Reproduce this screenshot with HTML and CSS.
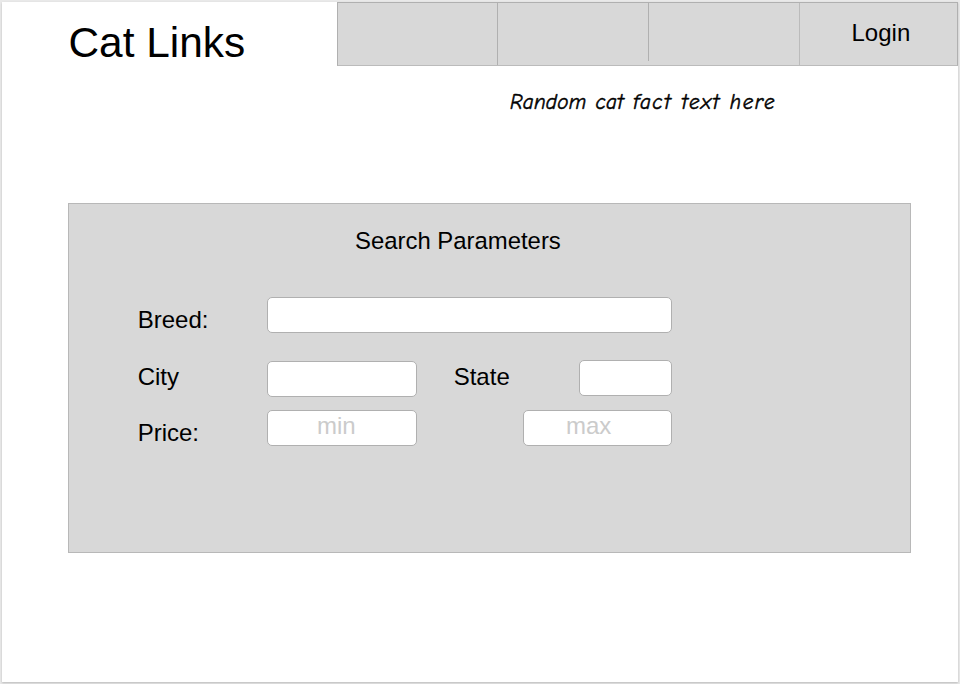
FILE: index.html
```html
<!DOCTYPE html>
<html lang="en">
<head>
<meta charset="utf-8">
<title>Cat Links</title>
<link rel="stylesheet" href="styles.css">
</head>
<body>
<div class="page">
  <header class="header">
    <h1 class="brand">Cat Links</h1>
    <nav class="nav">
      <div class="nav-item"></div>
      <div class="nav-item"></div>
      <div class="nav-item"></div>
      <div class="nav-item login">Login</div>
    </nav>
  </header>
  <p class="fact"><span class="lead">Random</span> <span class="lead">cat</span> <span>fact</span> <span>text</span> <span>here</span></p>
  <main class="panel">
    <h2 class="title">Search Parameters</h2>
    <div class="row breed">
      <span class="label">Breed:</span>
      <div class="field wide"></div>
    </div>
    <div class="row place">
      <span class="label">City</span>
      <div class="field city"></div>
      <span class="label state-label">State</span>
      <div class="field state"></div>
    </div>
    <div class="row price">
      <span class="label">Price:</span>
      <div class="field min">min</div>
      <div class="field max">max</div>
    </div>
  </main>
</div>
</body>
</html>
```
FILE: styles.css
```css
* { box-sizing: border-box; }
body {
  margin: 0;
  height: 684px;
  padding: 2px;
  overflow: hidden;
  background: #e9e9e9;
  color: #000;
  font: 24px/28px "Liberation Sans", Arial, sans-serif;
}
.page {
  height: 680px;
  background: #fff;
  box-shadow: 0 1px 2px #bbb;
}
.header {
  display: flex;
  height: 64px;
}
.brand {
  width: 335px;
  margin: 0;
  padding: 17px 0 0 66.5px;
  font-size: 42.4px;
  line-height: 48px;
  font-weight: 400;
}
.nav {
  display: grid;
  grid-template-columns: 160px 151px 151px 157px;
  width: 621px;
  border: 1px solid #b0b0b0;
  border-bottom-color: #bbb;
  background: #d8d8d8;
}
.nav-item { border-right: 1px solid #b0b0b0; }
.nav-item:nth-child(2) { height: 58px; }
.nav-item:nth-child(3) { border-right-color: #bbb; }
.nav-item.login {
  border-right: 0;
  padding: 16px 0 0 51.5px;
}
.fact {
  display: flex;
  justify-content: space-between;
  width: 266px;
  margin: 22px 0 0 508px;
  font: italic 21px/28px "Bradley Hand", "Comic Neue", Lato, cursive;
  letter-spacing: 1.5px;
  -webkit-text-stroke: 0.5px #000;
}
.fact .lead { letter-spacing: 0.3px; }
.panel {
  width: 843px;
  height: 350px;
  margin: 87px 0 0 66px;
  padding: 23px 0 0 68px;
  border: 1px solid #b8b8b8;
  background: #d8d8d8;
}
.title {
  margin: 0 0 0 218px;
  font-size: 23.9px;
  line-height: 28px;
  font-weight: 400;
}
.row {
  display: flex;
  align-items: flex-start;
}
.label {
  width: 130px;
  padding-left: 0.7px;
}
.breed { margin-top: 42px; height: 63px; }
.breed .label, .price .label { padding-top: 9px; }
.place { height: 50px; }
.place .label { padding-top: 3px; }
.field {
  height: 36px;
  border: 1px solid #b0b0b0;
  border-radius: 5px;
  background: #fff;
  color: #cbcbcb;
}
.wide { width: 405px; }
.city { width: 150px; margin-top: 1px; }
.place .state-label { width: 126px; margin-left: 36px; }
.state { width: 93px; }
.min { width: 150px; padding-left: 49px; }
.max { width: 149px; margin-left: 106px; padding-left: 42px; }
.max, .min { line-height: 29px; }
```
